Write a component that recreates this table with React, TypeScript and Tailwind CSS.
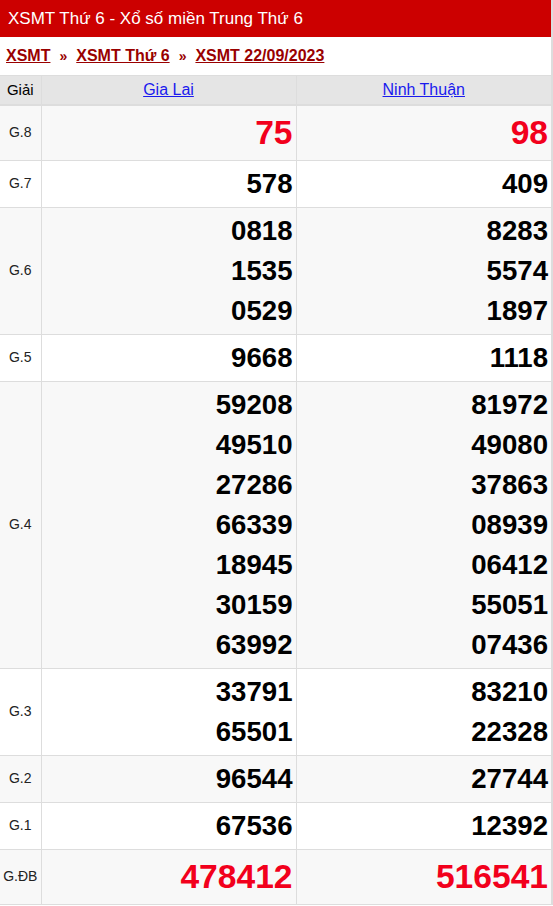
const rows: { label: string; a: string[]; b: string[]; big?: boolean }[] = [
  { label: "G.8", a: ["75"], b: ["98"], big: true },
  { label: "G.7", a: ["578"], b: ["409"] },
  { label: "G.6", a: ["0818", "1535", "0529"], b: ["8283", "5574", "1897"] },
  { label: "G.5", a: ["9668"], b: ["1118"] },
  {
    label: "G.4",
    a: ["59208", "49510", "27286", "66339", "18945", "30159", "63992"],
    b: ["81972", "49080", "37863", "08939", "06412", "55051", "07436"],
  },
  { label: "G.3", a: ["33791", "65501"], b: ["83210", "22328"] },
  { label: "G.2", a: ["96544"], b: ["27744"] },
  { label: "G.1", a: ["67536"], b: ["12392"] },
  { label: "G.ĐB", a: ["478412"], b: ["516541"], big: true },
];

function Cell({ nums, big }: { nums: string[]; big?: boolean }) {
  return (
    <td className="border-l border-[#ddd] px-[3px] py-[3px] text-right align-middle">
      {nums.map((n) =>
        big ? (
          <div key={n} className="text-[33.6px] font-bold leading-[48px] text-[#f2001c]">
            {n}
          </div>
        ) : (
          <div key={n} className="text-[27.6px] font-bold leading-[40px] text-black">
            {n}
          </div>
        ),
      )}
    </td>
  );
}

export default function App() {
  return (
    <div className="w-[553px] border-r-2 border-[#ddd] bg-white font-['Liberation_Sans',Arial,sans-serif]">
      <h1 className="h-[37px] bg-[#cc0000] pl-[8px] text-[17px] leading-[37px] font-normal text-white">
        XSMT Thứ 6 - Xổ số miền Trung Thứ 6
      </h1>
      <div className="flex h-[38px] items-center gap-[9px] px-[6px] text-[16px] font-bold text-[#990000]">
        <a href="#" className="underline">XSMT</a>
        <span className="text-[14px]">»</span>
        <a href="#" className="underline">XSMT Thứ 6</a>
        <span className="text-[14px]">»</span>
        <a href="#" className="underline">XSMT 22/09/2023</a>
      </div>
      <table className="w-full table-fixed border-collapse">
        <colgroup>
          <col className="w-[41px]" />
          <col />
          <col />
        </colgroup>
        <thead>
          <tr className="h-[29px] border-t border-b-2 border-[#ddd] bg-[#e5e5e5] text-[16px]">
            <th className="text-center text-[15px] font-normal text-black">Giải</th>
            <th className="border-l border-[#ddd] text-center font-normal">
              <a href="#" className="text-[#1a1aee] underline">Gia Lai</a>
            </th>
            <th className="border-l border-[#ddd] text-center font-normal">
              <a href="#" className="text-[#1a1aee] underline">Ninh Thuận</a>
            </th>
          </tr>
        </thead>
        <tbody>
          {rows.map((r, i) => (
            <tr key={r.label} className={`border-b border-[#ddd] ${i % 2 === 0 ? "bg-[#f8f8f8]" : "bg-white"}`}>
              <td className="text-center text-[14px] text-[#222]">{r.label}</td>
              <Cell nums={r.a} big={r.big} />
              <Cell nums={r.b} big={r.big} />
            </tr>
          ))}
        </tbody>
      </table>
    </div>
  );
}
